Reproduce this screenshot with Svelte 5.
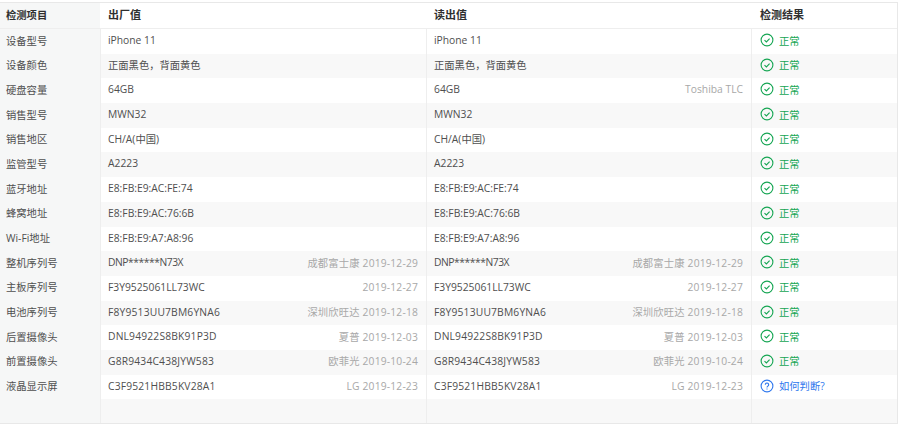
<script>
	const rows = [
		['设备型号', 'iPhone 11', '', 'iPhone 11', ''],
		['设备颜色', '正面黑色，背面黄色', '', '正面黑色，背面黄色', ''],
		['硬盘容量', '64GB', '', '64GB', 'Toshiba TLC'],
		['销售型号', 'MWN32', '', 'MWN32', ''],
		['销售地区', 'CH/A(中国)', '', 'CH/A(中国)', ''],
		['监管型号', 'A2223', '', 'A2223', ''],
		['蓝牙地址', 'E8:FB:E9:AC:FE:74', '', 'E8:FB:E9:AC:FE:74', ''],
		['蜂窝地址', 'E8:FB:E9:AC:76:6B', '', 'E8:FB:E9:AC:76:6B', ''],
		['Wi-Fi地址', 'E8:FB:E9:A7:A8:96', '', 'E8:FB:E9:A7:A8:96', ''],
		['整机序列号', 'DNP******N73X', '成都富士康 2019-12-29', 'DNP******N73X', '成都富士康 2019-12-29'],
		['主板序列号', 'F3Y9525061LL73WC', '2019-12-27', 'F3Y9525061LL73WC', '2019-12-27'],
		['电池序列号', 'F8Y9513UU7BM6YNA6', '深圳欣旺达 2019-12-18', 'F8Y9513UU7BM6YNA6', '深圳欣旺达 2019-12-18'],
		['后置摄像头', 'DNL94922S8BK91P3D', '夏普 2019-12-03', 'DNL94922S8BK91P3D', '夏普 2019-12-03'],
		['前置摄像头', 'G8R9434C438JYW583', '欧菲光 2019-10-24', 'G8R9434C438JYW583', '欧菲光 2019-10-24'],
		['液晶显示屏', 'C3F9521HBB5KV28A1', 'LG 2019-12-23', 'C3F9521HBB5KV28A1', 'LG 2019-12-23']
	];
</script>

<div class="report">
	<div class="row head">
		<div class="name">检测项目</div>
		<div class="cell">出厂值</div>
		<div class="cell">读出值</div>
		<div class="result">检测结果</div>
	</div>
	{#each rows as row, i}
		<div class="row" class:odd={i % 2 === 1} class:masked={i === 9} class:serial={i >= 11}>
			<div class="name">{row[0]}</div>
			<div class="cell">
				<span class="value">{row[1]}</span>
				<span class="note" class:dated={i >= 9}>{row[2]}</span>
			</div>
			<div class="cell">
				<span class="value">{row[3]}</span>
				<span class="note" class:dated={i >= 9}>{row[4]}</span>
			</div>
			{#if i < rows.length - 1}
				<div class="result ok">
					<svg viewBox="0 0 14 14" width="14" height="14">
						<circle cx="7" cy="7" r="5.9" />
						<path d="M4.5 7.1l1.9 1.9 3.2-3.4" />
					</svg>
					<span>正常</span>
				</div>
			{:else}
				<div class="result ask">
					<svg viewBox="0 0 14 14" width="14" height="14">
						<circle cx="7" cy="7" r="5.9" />
						<path d="M5.3 5.7a1.7 1.7 0 1 1 2.6 1.4c-.6.4-.9.7-.9 1.4" />
						<path d="M7 9.6v1" />
					</svg>
					<span>如何判断?</span>
				</div>
			{/if}
		</div>
	{/each}
	<div class="row empty">
		<div class="name"></div>
		<div class="cell"></div>
		<div class="cell"></div>
		<div class="result"></div>
	</div>
</div>

<style>
	:global(body) {
		background: #fff;
	}
	.report {
		width: 898px;
		height: 422px;
		margin-top: 2px;
		box-sizing: border-box;
		display: flex;
		flex-direction: column;
		border-top: 1px solid #e8e8e8;
		border-right: 1px solid #e8e8e8;
		border-bottom: 1px solid #e8e8e8;
		font-family: "Open Sans", "Noto Sans CJK SC", sans-serif;
		font-size: 10.3px;
		color: #4f4f4f;
	}
	.row {
		display: grid;
		grid-template-columns: 100px 326px 325px 1fr;
		height: 24.7px;
		flex: none;
		align-items: stretch;
	}
	.row > div {
		display: flex;
		align-items: center;
		box-sizing: border-box;
		padding-bottom: 2.6px;
	}
	.head {
		height: 25px;
		border-bottom: 1px solid #eee;
		color: #2f2f2f;
		font-weight: 600;
	}
	.head .cell,
	.head .result {
		font-size: 11px;
		border-left-color: transparent;
	}
	.odd,
	.empty {
		background: #f8f8f8;
	}
	.empty {
		flex: 1;
	}
	.name {
		padding-left: 6px;
		background: #f6f7f7;
	}
	.cell {
		justify-content: space-between;
		padding: 0 8px 0 7px;
		border-left: 1px solid #eee;
	}
	.serial .value {
		letter-spacing: 0.17px;
	}
	.masked .value {
		letter-spacing: -0.45px;
	}
	.note {
		color: #a8a8a8;
	}
	.dated {
		letter-spacing: 0.17px;
	}
	.result {
		padding-left: 8px;
		gap: 5px;
		border-left: 1px solid #eee;
	}
	.ok {
		color: #14a552;
	}
	.ask {
		color: #2f78ee;
	}
	svg {
		flex: none;
		fill: none;
		stroke: currentColor;
		stroke-width: 1.1;
	}
</style>
